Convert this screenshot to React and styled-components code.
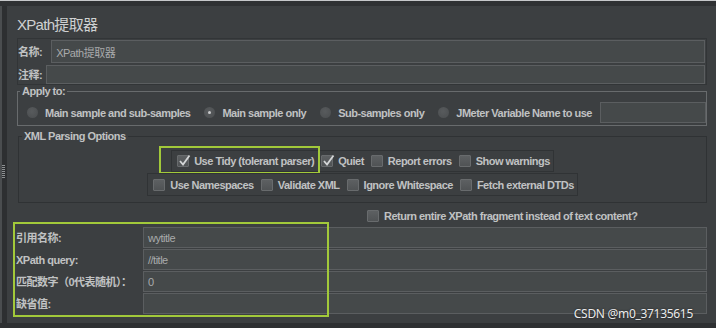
import React from "react";
import styled, { createGlobalStyle } from "styled-components";

const GlobalStyle = createGlobalStyle`
  *, *::before, *::after { box-sizing: border-box; }
  html, body { margin: 0; padding: 0; background: #3c3f41; }
  body { font-family: "Liberation Sans", "Noto Sans CJK SC", sans-serif; }
`;

const Page = styled.div`
  position: relative;
  width: 716px;
  height: 328px;
  overflow: hidden;
  display: flex;
  flex-direction: column;
  background: #3c3f41;
  border-top: 1px solid #c6c8ca;
`;

const TopBar = styled.div`
  height: 5px;
  background: #2f3133;
`;

const BottomBar = styled.div`
  height: 5px;
  background: #2e3032;
`;

const Main = styled.div`
  flex: 1;
  display: flex;
  min-height: 0;
`;

const Rail = styled.div`
  width: 7px;
  background: #2d2f31;
  border-left: 2px solid #4a4d4f;
  padding-top: 159px;
`;

const Grip = styled.div`
  width: 3px;
  height: 13px;
  background: repeating-linear-gradient(to bottom, #8d9092 0 1px, transparent 1px 2px);
`;

const Content = styled.div`
  flex: 1;
  display: flex;
  flex-direction: column;
  padding: 0 9px 0 10px;
`;

const Title = styled.div`
  padding-top: 6px;
  line-height: 26px;
  font-size: 15px;
  color: #cfd1d2;
  letter-spacing: -0.7px;
`;

const NamePanel = styled.div`
  display: flex;
  flex-direction: column;
  gap: 2px;
  padding: 1px 1px 0 0;
  border: 1px solid #323537;
`;

const FieldRow = styled.div`
  display: flex;
  align-items: center;
  gap: ${(p) => p.$gap || 4}px;
  height: ${(p) => p.$h || 21}px;
`;

const Label = styled.span`
  font-size: 11px;
  font-weight: bold;
  color: #c0c2c3;
  letter-spacing: -0.5px;
  white-space: nowrap;
  line-height: 12px;
`;

const Field = styled.div`
  flex: 1;
  align-self: stretch;
  display: flex;
  align-items: center;
  padding: 0 4px;
  background: #45494a;
  border: 1px solid #5b5e60;
  color: #a9abac;
  font-size: 11px;
  letter-spacing: -0.5px;
`;

const Group = styled.fieldset`
  margin: ${(p) => p.$mt || 0}px 0 0 ${(p) => p.$ml || 0}px;
  min-width: 0;
  padding: ${(p) => p.$pt}px 0 ${(p) => p.$pb}px 9px;
  border: 1px solid ${(p) => p.$line};
`;

const Legend = styled.legend`
  padding: 0 2px;
  margin-left: ${(p) => p.$ml}px;
  font-size: 11px;
  font-weight: bold;
  line-height: 12px;
  color: #c0c2c3;
  letter-spacing: -0.5px;
`;

const RadioRow = styled.div`
  display: flex;
  align-items: center;
  height: 21px;
  gap: 14px;
`;

const RadioItem = styled.label`
  display: flex;
  align-items: center;
  gap: 7px;
`;

const Radio = styled.span`
  position: relative;
  width: 11px;
  height: 11px;
  border-radius: 50%;
  background: radial-gradient(circle at 45% 40%, #585b5d, #4a4d4f);
  &::after {
    content: "";
    display: ${(p) => (p.$on ? "block" : "none")};
    position: absolute;
    left: 4px;
    top: 4px;
    width: 3px;
    height: 3px;
    border-radius: 50%;
    background: #c8cacb;
  }
`;

const ApplyField = styled(Field)`
  margin-left: -6px;
  flex: 1;
`;

const OptionStack = styled.div`
  display: flex;
  flex-direction: column;
  align-items: center;
  gap: 1px;
  margin-left: -9px;
`;

const CheckPanel = styled.div`
  position: relative;
  display: flex;
  align-items: center;
  gap: ${(p) => p.$gap}px;
  height: ${(p) => p.$h}px;
  padding: 0 3px 0 5px;
  border: 1px solid #303335;
`;

const CheckItem = styled.label`
  display: flex;
  align-items: center;
  gap: 5px;
`;

const Box = styled.span`
  position: relative;
  width: 12px;
  height: 12px;
  border: 1px solid #686b6d;
  border-radius: 1px;
  background: linear-gradient(#5d6062, #505355);
  svg {
    position: absolute;
    left: 0;
    top: -2px;
    overflow: visible;
  }
`;

const Highlight = styled.div`
  position: absolute;
  left: ${(p) => p.$x}px;
  top: ${(p) => p.$y}px;
  width: ${(p) => p.$w}px;
  height: ${(p) => p.$hh}px;
  border: 2px solid #a2c93a;
  pointer-events: none;
`;

const ReturnRow = styled.div`
  display: flex;
  align-items: center;
  height: 20px;
  margin-top: 3px;
  padding-left: 350px;
`;

const VarGrid = styled.div`
  position: relative;
  display: grid;
  grid-template-columns: 126px 1fr;
  grid-auto-rows: 21px;
  row-gap: 1px;
  margin-top: 1px;
  ${Label} {
    align-self: center;
    margin-left: -1px;
  }
`;

const Watermark = styled.div`
  position: absolute;
  right: 23px;
  top: 305px;
  font-family: "Noto Sans", "Liberation Sans", sans-serif;
  font-size: 12px;
  line-height: 16px;
  color: #ececec;
  letter-spacing: -0.3px;
  text-shadow: 0 0 2px rgba(0, 0, 0, 0.7);
`;

const Check = ({ on, children }) => (
  <CheckItem>
    <Box>
      {on && (
        <svg width="13" height="13" viewBox="0 0 13 13">
          <path d="M2 7 L5 10.5 L11.5 1.5" fill="none" stroke="#d4d6d7" strokeWidth="1.8" />
        </svg>
      )}
    </Box>
    <Label>{children}</Label>
  </CheckItem>
);

const RadioOpt = ({ on, children }) => (
  <RadioItem>
    <Radio $on={on} />
    <Label>{children}</Label>
  </RadioItem>
);

const App = () => {
  return (
    <>
      <GlobalStyle />
      <Page>
        <TopBar />
        <Main>
          <Rail>
            <Grip />
          </Rail>
          <Content>
            <Title>XPath提取器</Title>
            <NamePanel>
              <FieldRow $gap={9} $h={23}>
                <Label>名称:</Label>
                <Field>XPath提取器</Field>
              </FieldRow>
              <FieldRow $gap={4} $h={19}>
                <Label>注释:</Label>
                <Field />
              </FieldRow>
            </NamePanel>

            <Group $mt={0} $pt={5} $pb={2} $line="#686b6d">
              <Legend $ml={-7}>Apply to:</Legend>
              <RadioRow>
                <RadioOpt>Main sample and sub-samples</RadioOpt>
                <RadioOpt on>Main sample only</RadioOpt>
                <RadioOpt>Sub-samples only</RadioOpt>
                <RadioOpt>JMeter Variable Name to use</RadioOpt>
                <ApplyField />
              </RadioRow>
            </Group>

            <Group $mt={4} $ml={1} $pt={8} $pb={6} $line="#2f3234">
              <Legend $ml={-6}>XML Parsing Options</Legend>
              <OptionStack>
                <CheckPanel $h={22} $gap={7}>
                  <Check on>Use Tidy (tolerant parser)</Check>
                  <Check on>Quiet</Check>
                  <Check>Report errors</Check>
                  <Check>Show warnings</Check>
                  <Highlight $x={-13} $y={-5} $w={161} $hh={28} />
                </CheckPanel>
                <CheckPanel $h={23} $gap={7}>
                  <Check>Use Namespaces</Check>
                  <Check>Validate XML</Check>
                  <Check>Ignore Whitespace</Check>
                  <Check>Fetch external DTDs</Check>
                </CheckPanel>
              </OptionStack>
            </Group>

            <ReturnRow>
              <Check>Return entire XPath fragment instead of text content?</Check>
            </ReturnRow>

            <VarGrid>
              <Label>引用名称:</Label>
              <Field>wytitle</Field>
              <Label>XPath query:</Label>
              <Field>//title</Field>
              <Label>匹配数字（0代表随机）：</Label>
              <Field>0</Field>
              <Label>缺省值:</Label>
              <Field />
              <Highlight $x={-4} $y={-5} $w={316} $hh={95} />
            </VarGrid>
          </Content>
        </Main>
        <BottomBar />
        <Watermark>CSDN @m0_37135615</Watermark>
      </Page>
    </>
  );
};

export default App;
